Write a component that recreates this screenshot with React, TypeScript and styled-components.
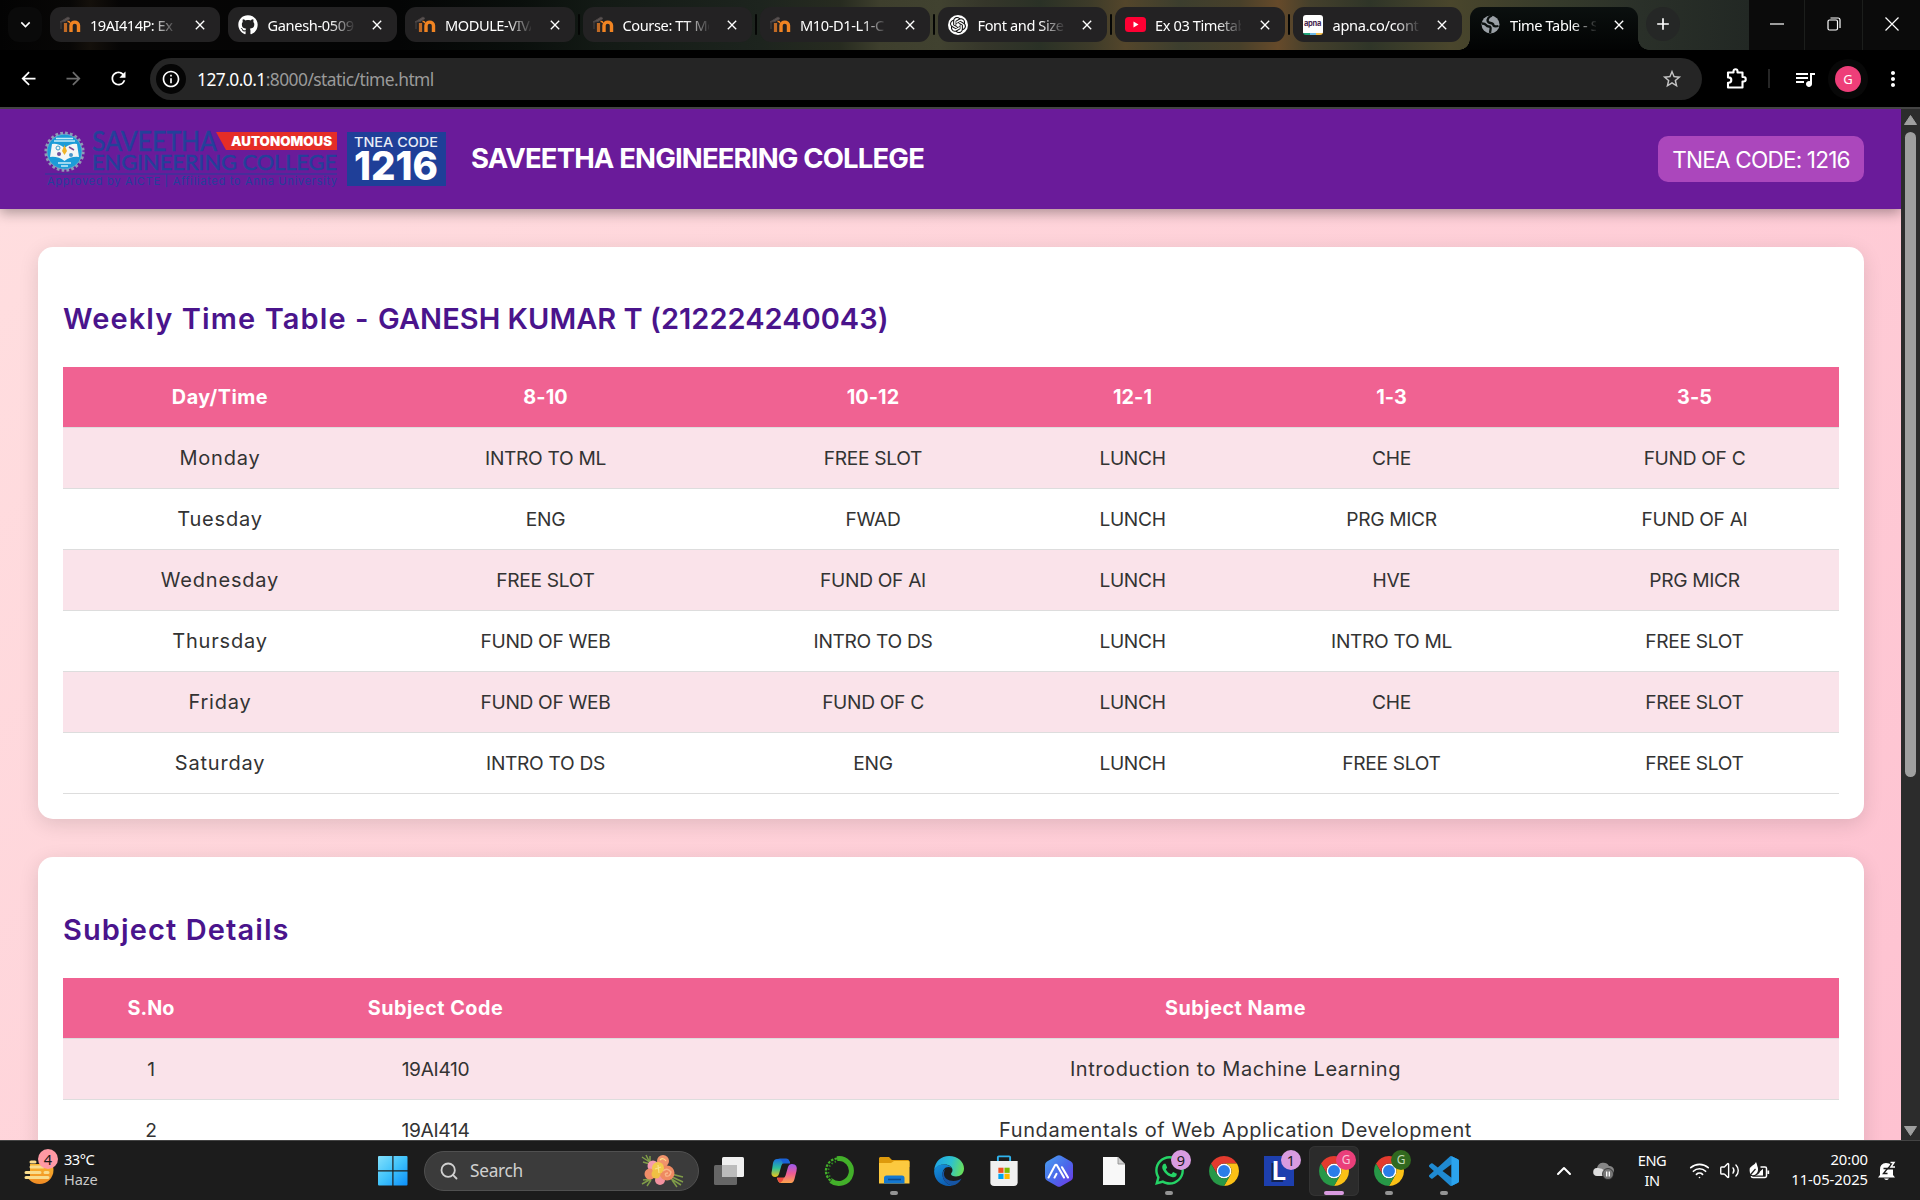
import React from "react";
import styled, { createGlobalStyle } from "styled-components";
import { FaGithub, FaWhatsapp } from "react-icons/fa6";
import { SiOpenai } from "react-icons/si";
import {
  MdArrowBack, MdArrowForward, MdRefresh, MdStarBorder, MdQueueMusic,
  MdMoreVert, MdAdd, MdClose, MdInfoOutline, MdKeyboardArrowDown,
} from "react-icons/md";
import { Wifi, Volume2, ChevronUp, Search } from "lucide-react";

const Global = createGlobalStyle`
  *{box-sizing:border-box}
  body{margin:0;background:#000;overflow:hidden}
`;
const UI = `"Noto Sans","Open Sans",sans-serif`;
const PAGE = `Inter,"Open Sans",sans-serif`;

const Screen = styled.div`
  width:1920px;height:1200px;display:flex;flex-direction:column;overflow:hidden;
  font-family:${UI};color:#fff;background:#000;
`;

/* ---------- browser chrome ---------- */
const TabStrip = styled.div`
  height:50px;flex:none;display:flex;align-items:flex-start;padding:7px 0 0 8px;
  background:linear-gradient(90deg,#030303 0,#080706 70px,#14100b 90px,#060505 120px,#040505 400px,#0a0f0c 520px,#131a15 600px,#1d241e 760px,#272b20 840px,#3e3f2d 880px,#414230 940px,#35362a 985px,#2a3126 1040px,#3d3b29 1090px,#54462b 1125px,#3c3e2e 1180px,#48402a 1240px,#664a2a 1278px,#45402c 1310px,#2f3528 1370px,#4a462c 1450px,#353a2b 1560px,#2a3029 1640px,#222824 1749px);
`;
const TabSearch = styled.div`
  width:34px;height:35px;border-radius:11px;background:#0a0a0a;margin-right:8px;
  display:grid;place-items:center;font-size:19px;
`;
const TabBox = styled.div<{ $active?: boolean }>`
  width:${p => (p.$active ? 168 : 169.5)}px;height:${p => (p.$active ? 43 : 35)}px;margin-right:8px;flex:none;
  padding:${p => (p.$active ? "0 11px 8px 10px" : "0 12px 0 10px")};
  border-radius:${p => (p.$active ? "11px 11px 0 0" : "11px")};
  background:${p => (p.$active ? "linear-gradient(#0b100f,#020303)" : "#232223")};
  display:flex;align-items:center;position:relative;
  &::before,&::after{content:"";display:${p => (p.$active ? "block" : "none")};position:absolute;bottom:0;width:11px;height:11px}
  &::before{left:-11px;background:radial-gradient(circle at 0 0,transparent 10.5px,#020303 11px)}
  &::after{right:-11px;background:radial-gradient(circle at 100% 0,transparent 10.5px,#020303 11px)}
`;
const TabLine = styled.i`
  position:absolute;left:-5px;top:7px;width:2px;height:21px;background:#050605;border-radius:1px;
`;
const Fav = styled.span`width:20px;height:22px;flex:none;display:grid;place-items:center;font-size:20px`;
const TabName = styled.span<{ $ls?: number }>`
  width:86px;margin-left:10px;font-size:14.6px;letter-spacing:${p => p.$ls ?? -0.4}px;line-height:22px;white-space:nowrap;overflow:hidden;
  -webkit-mask-image:linear-gradient(90deg,#000 62px,transparent 88px);
  mask-image:linear-gradient(90deg,#000 62px,transparent 88px);
`;
const TabClose = styled.span`margin-left:auto;display:grid;place-items:center;font-size:16px;stroke:#fff;stroke-width:.8px`;
const NewTab = styled.div`width:34px;height:34px;border-radius:50%;background:#252726;display:grid;place-items:center;font-size:20px`;
const WinButtons = styled.div`margin:-7px 0 0 auto;width:171px;height:50px;display:grid;grid-template-columns:56px 58px 57px;background:#0b0b0b`;
const WinButton = styled.div`display:grid;place-items:center;border-right:1px solid #1c1e1c;padding-bottom:2px;&:last-child{border:0}`;

const Toolbar = styled.div`
  height:57px;flex:none;display:flex;align-items:center;background:#000;padding-left:16px;
`;
const Nav = styled.span<{ $dim?: boolean; $mr: number }>`
  width:24px;height:24px;flex:none;display:grid;place-items:center;font-size:21px;margin-right:${p => p.$mr}px;color:${p => (p.$dim ? "#6d6d6d" : "#fff")};
`;
const Omnibox = styled.div`
  width:1552px;flex:none;height:42px;border-radius:21px;background:#252525;display:flex;align-items:center;padding:0 19px 0 6px;
`;
const Info = styled.span`width:30px;height:30px;border-radius:50%;background:#050505;display:grid;place-items:center;font-size:20px`;
const Url = styled.span`margin-left:11px;font-size:17.4px;letter-spacing:-.55px;color:#9a9a9a;flex:1;b{font-weight:400;color:#fff}`;
const Right = styled.div`display:flex;align-items:center;flex:none;padding-left:23px;svg{flex:none}`;
const Bar = styled.i`width:2px;height:19px;background:#262626;margin:0 23px 0 20px`;
const Avatar = styled.span`width:26px;height:26px;border-radius:50%;background:#ee3e79;box-shadow:0 0 0 7px #080808;display:grid;place-items:center;font-size:13px;margin:0 20px 0 18px`;
const Edge = styled.div`height:2px;flex:none;background:#444`;

/* ---------- web page ---------- */
const Viewport = styled.div`height:1031px;flex:none;display:flex;overflow:hidden`;
const Page = styled.div`
  width:1901px;height:1031px;overflow:hidden;font-family:${PAGE};
  background:linear-gradient(135deg,#ffdfe0,#fec2d1);
`;
const Header = styled.header`
  height:100px;background:#6a1b9a;box-shadow:0 4px 12px rgba(0,0,0,.32);
  display:flex;align-items:center;padding:0 37px 0 44px;
`;
const College = styled.h1`margin:0 auto 2px 24px;font-size:27.5px;font-weight:650;letter-spacing:-.85px;line-height:40px;white-space:nowrap`;
const Code = styled.span`
  width:206px;height:46px;border-radius:10px;background:#ab47bc;display:grid;place-items:center;
  font-size:22.6px;letter-spacing:-.82px;white-space:nowrap;
`;
const Main = styled.main`padding:38px 37px 0 38px;display:flex;flex-direction:column;gap:38px`;
const Card = styled.section`
  background:#fff;border-radius:15px;padding:25px;box-shadow:0 5px 20px rgba(0,0,0,.12);
`;
const Title = styled.h2<{ $mt: number }>`
  margin:${p => p.$mt}px 0 24px;height:46px;line-height:44px;font-size:29px;font-weight:600;color:#4a148c;letter-spacing:.03px;white-space:nowrap;
`;
const Words = styled.span`letter-spacing:1.1px`;
const Table = styled.table`width:1776px;table-layout:fixed;border-collapse:separate;border-spacing:0;font-size:19.2px;color:#333`;
const Col = styled.col<{ $w: number }>`width:${p => p.$w}px`;
const Row = styled.tr`&:nth-child(odd){background:#fae3ea}`;
const Th = styled.th<{ $ls: number }>`height:61px;padding:0;background:#f06292;border-bottom:1px solid #ddd;color:#fff;font-weight:650;font-size:19.8px;letter-spacing:${p => p.$ls}px`;
const Td = styled.td<{ $kind: "caps" | "words" | "day" }>`
  height:61px;padding:0;text-align:center;border-bottom:1px solid #ddd;
  font-size:${p => (p.$kind === "caps" ? 19.2 : 20)}px;
  letter-spacing:${p => ({ caps: -0.33, words: 0.58, day: 0.8 })[p.$kind]}px;
`;

const Scroll = styled.div`width:19px;background:#2c2c2c;display:flex;flex-direction:column;align-items:center;padding:6px 0 4px`;
const Thumb = styled.div`width:11px;height:645px;border-radius:6px;background:#9f9f9f;margin:7px 0 auto`;

/* ---------- taskbar ---------- */
const Taskbar = styled.footer`
  height:60px;flex:none;background:#1c1c1c;border-top:1px solid #444;display:flex;align-items:center;
`;
const Weather = styled.div`width:354px;padding-left:24px;display:flex;align-items:center;height:59px`;
const WeatherIcon = styled.div`position:relative;width:32px;height:40px;margin:0 8px 2px 0`;
const WeatherText = styled.div`font-size:14.6px;line-height:20px;letter-spacing:-.5px;padding-bottom:3px;span{display:block;color:#c9c9c9;letter-spacing:-.1px}`;
const Cell = styled.div<{ $on?: boolean }>`
  width:50px;height:50px;margin-right:5px;flex:none;display:grid;place-items:center;position:relative;border-radius:6px;
  background:${p => (p.$on ? "#2b2b2b" : "transparent")};box-shadow:${p => (p.$on ? "inset 0 0 0 1px #333" : "none")};
`;
const StartCell = styled(Cell)`width:77px;margin:0`;
const SearchBox = styled.div`
  width:275px;height:40px;border-radius:20px;background:#3b3b3b;border:1px solid #505050;display:flex;align-items:center;
  padding:0 12px 0 14px;font-size:17.3px;letter-spacing:-.3px;color:#d0d0d0;margin:0 5px 0 -7px;
  span{margin:0 auto 0 11px}
`;
const Dot = styled.i<{ $on?: boolean }>`
  position:absolute;bottom:1px;left:50%;transform:translateX(-50%);width:${p => (p.$on ? 20 : 8)}px;height:4px;border-radius:2px;
  background:${p => (p.$on ? "#d99be0" : "#949494")};
`;
const Badge = styled.b<{ $c: string; $t?: string }>`
  position:absolute;left:27px;top:4px;width:20px;height:20px;border-radius:50%;background:${p => p.$c};color:${p => p.$t ?? "#1a1a1a"};
  display:grid;place-items:center;font-weight:400;font-size:${p => (p.$t ? 12 : 14.5)}px;line-height:20px;
`;
const WBadge = styled(Badge)`left:14px;top:-1px`;
const Tray = styled.div`margin-left:auto;display:flex;align-items:center;height:59px;padding-right:24px;font-size:15px;line-height:20px`;
const Lang = styled.div`width:30px;margin:0 22px 2px 22px;text-align:center;letter-spacing:-.45px;font-size:14.6px`;
const Icons = styled.div`display:flex;gap:9px;align-items:center`;
const Clock = styled.div`width:80px;margin:0 10px 4px 18px;text-align:right;font-size:14.8px;letter-spacing:-.05px;white-space:nowrap`;

/* ---------- drawings ---------- */
const Moodle = () => (
  <svg width="21" height="18" viewBox="0 0 21 18">
    <path d="M0 6l8-5 2 1.500-5 3zM1 6v7" fill="#5a5352" stroke="#4b4545" strokeWidth="1" />
    <path d="M5.500 16V7" stroke="#c06a25" strokeWidth="3.200" />
    <path d="M11 16V9.500c0-4.500 7.500-4.500 7.500 0V16" fill="none" stroke="#f18422" strokeWidth="3.400" />
    <path d="M7.500 5.500q2-.5 2.500 1.500" fill="none" stroke="#f18422" strokeWidth="1.500" />
  </svg>
);
const Globe = () => (
  <svg width="19" height="19" viewBox="0 0 19 19">
    <circle cx="9.500" cy="9.500" r="9" fill="#9aa0a6" />
    <path d="M11 .5Q7 2 6.500 5q0 2.500 3 3t3 2.500q1 1.500 5 .5M1 8.500q3 0 4 1.500t3 1.500 1.500 3L9 18" fill="none" stroke="#0b100f" strokeWidth="2.300" />
  </svg>
);
const Gpt = styled.span`width:20px;height:20px;border-radius:50%;background:#fff;color:#111;display:grid;place-items:center;font-size:16px`;
const Apna = styled.span`
  width:20px;height:20px;border-radius:3px;background:linear-gradient(90deg,#1fa67a 33%,#6db9e8 33% 66%,#f3bd4d 66%) bottom/100% 2px no-repeat #fff;
  color:#46264f;font:700 7.6px/18px ${PAGE};text-align:center;letter-spacing:-.3px;
`;
const YouTube = () => (
  <svg width="21" height="15" viewBox="0 0 21 15"><rect width="21" height="15" rx="3.500" fill="#ff0033" /><path d="M8.500 4.500l5 3-5 3z" fill="#fff" /></svg>
);
const Puzzle = () => (
  <svg width="23" height="23" viewBox="0 0 23 23">
    <path d="M3 5.500H8.500V4.200a2 2 0 0 1 4 0V5.500H17.500V10h1a2 2 0 0 1 0 4.500h-1V20.500H3V15.800h.6a2.600 2.600 0 0 0 0-5.400H3z" fill="none" stroke="#fff" strokeWidth="2.100" strokeLinejoin="round" />
  </svg>
);

const Logo = () => (
  <svg width="403" height="58" viewBox="44 130 403 58">
    <circle cx="64.500" cy="151.700" r="18.600" fill="none" stroke="#8f9bb5" strokeWidth="3" strokeDasharray="2.700 2.172" />
    <circle cx="64.500" cy="151.700" r="17.500" fill="#1c9cd8" stroke="#7fb0c8" strokeWidth=".8" />
    <path d="M52 144q6-1 12.500 4 6.500-5 12.500-4l2 13q-8-1-14.500 4-6.500-5-14.500-4z" fill="#f4f6f5" />
    <circle cx="58" cy="148" r="2" fill="none" stroke="#3e9dc9" /><circle cx="59" cy="154" r="2" fill="#72509a" />
    <circle cx="71" cy="155" r="2" fill="#4a96c9" /><path d="M69 147l5 3" stroke="#7b4a96" strokeWidth="1.500" />
    <path d="M64.500 145l2.500 6-2.500 4-2.500-4z" fill="#f0b429" />
    <path d="M54 141h21M56 138.500h17M58 163h13M61 166h7" stroke="#c7ecf8" strokeWidth="1.300" />
    <g fill="#24409a" stroke="#24409a" fontFamily="Lato,sans-serif">
      <text x="92" y="151" fontSize="26" strokeWidth=".5" textLength="125" lengthAdjust="spacingAndGlyphs">SAVEETHA</text>
      <text x="92" y="169.500" fontSize="20.500" strokeWidth=".5" textLength="245" lengthAdjust="spacingAndGlyphs">ENGINEERING COLLEGE</text>
      <text x="47" y="184.500" fontSize="11" strokeWidth="0" textLength="290" lengthAdjust="spacing" fontFamily="Inter,sans-serif">Approved by AICTE | Affiliated to Anna University</text>
    </g>
    <path d="M45 174H337" stroke="#24409a" />
    <path d="M216 132H337V150H226z" fill="#e52d27" />
    <text x="231" y="146" fontSize="13" fontWeight="900" fill="#fff" fontFamily="Inter,sans-serif" textLength="101" lengthAdjust="spacingAndGlyphs">AUTONOMOUS</text>
    <rect x="347" y="132" width="99" height="54" fill="#1f3f98" />
    <text x="354" y="146.800" fontSize="13.500" fill="#e8ecf6" fontWeight="500" fontFamily="Inter,sans-serif" textLength="84" lengthAdjust="spacingAndGlyphs">TNEA CODE</text>
    <text x="354" y="180" fontSize="39" fill="#fff" fontWeight="800" fontFamily="Inter,sans-serif" textLength="84" lengthAdjust="spacingAndGlyphs">1216</text>
  </svg>
);

const Chrome = () => (
  <svg width="30" height="30" viewBox="0 0 48 48">
    <circle cx="24" cy="24" r="12" fill="#fff" />
    <path d="M24 12H44.780A24 24 0 0 0 3.217 12.003L13.608 30A12 12 0 0 1 24 12z" fill="#e33b2e" />
    <path d="M34.391 30.003L24 48A24 24 0 0 0 44.780 12.003H24A12 12 0 0 1 34.391 30.003z" fill="#fbc116" />
    <path d="M13.609 30.003L3.218 12.006A24 24 0 0 0 24.002 48L34.393 30.003A12 12 0 0 1 13.609 30.003z" fill="#279847" />
    <circle cx="24" cy="24" r="9.500" fill="#2a7de8" />
  </svg>
);
const Start = () => (
  <svg width="30" height="30" viewBox="0 0 30 30">
    <defs><linearGradient id="win" x1="0" y1="0" x2="1" y2="1"><stop stopColor="#83e0fb" /><stop offset=".5" stopColor="#3fc2fb" /><stop offset="1" stopColor="#0c8ffb" /></linearGradient></defs>
    <path fill="url(#win)" d="M1 0H14.300V14.300H0V1a1 1 0 0 1 1-1zM15.500 0H28.500a1 1 0 0 1 1 1V14.300H15.500zM0 15.500H14.300V29.500H1a1 1 0 0 1-1-1zM15.500 15.500H29.500V28.500a1 1 0 0 1-1 1H15.500z" />
  </svg>
);
const Flowers = () => (
  <svg width="46" height="34" viewBox="0 0 46 34">
    <g fill="none" stroke="#7f9c48" strokeWidth="1.500"><path d="M2 3l9 6M3 8l7 2M6 1l3 6M10 2v6M2 30l9-5M3 26l8-1M7 32l4-6M30 22l13 6M30 24l11 7M31 20l12 3M32 26l5 7" /></g>
    <circle cx="13" cy="12" r="5.500" fill="#f49bb0" /><circle cx="20" cy="26" r="5" fill="#f3929f" />
    <circle cx="23" cy="7" r="6" fill="#f0936b" /><circle cx="10" cy="20" r="5.500" fill="#f08d68" />
    <circle cx="27" cy="19" r="7.500" fill="#ee8a62" /><path d="M23 17q4-4 8 1-1 5-5 4-2-3 2-3" fill="none" stroke="#f9b58a" strokeWidth="1.400" />
    <circle cx="18" cy="14" r="6" fill="#f2c94b" /><circle cx="16" cy="20" r="4.500" fill="#f0c044" /><path d="M15 15l6-2M18 11l1 8M20 6q3-3 6 1" stroke="#fbe08a" strokeWidth="1.200" fill="none" />
  </svg>
);
const TaskView = () => (
  <svg width="32" height="30" viewBox="0 0 32 30"><rect x="1" y="9" width="23" height="20" rx="1.500" fill="#666" /><rect x="9" y="1" width="22" height="20" rx="1.500" fill="#f0f0f0" /><path d="M9 9H24V21H9z" fill="#bcbcbc" /></svg>
);
const Copilot = () => (
  <svg width="30" height="28" viewBox="0 0 30 28">
    <defs>
      <linearGradient id="ca" x1="0" y1="0" x2="0" y2="1"><stop stopColor="#1b6fe0" /><stop offset=".5" stopColor="#2cbf9b" /><stop offset="1" stopColor="#f2c718" /></linearGradient>
      <linearGradient id="cb" x1="0" y1="0" x2="0" y2="1"><stop stopColor="#9b5af0" /><stop offset=".5" stopColor="#ee5b94" /><stop offset="1" stopColor="#fca34b" /></linearGradient>
    </defs>
    <path d="M8 2h10q2 0 3 4l-6 0q-2 0-3 4l-2 7q-1 3-4 3-5 0-3-7l1-7q1-4 4-4z" fill="url(#ca)" />
    <path d="M8 1.500h9q3 0 4 5h-7q-1.500-5-6-5z" fill="#1a62d8" />
    <path d="M22 26H12q-3 0-4-5h6q2 0 3-4l2-7q1-3 4-3 6 0 4.500 7l-2 8q-1 4-3.500 4z" fill="url(#cb)" />
    <path d="M8 20.500h7q-1 4-4 5.500-2-2-3-5.500z" fill="#ee4a3c" />
  </svg>
);
const Anaconda = () => (
  <svg width="32" height="32" viewBox="0 0 32 32">
    <path d="M14 3.600A12.500 12.500 0 1 1 8 25.700" fill="none" stroke="#43b02a" strokeWidth="5" />
    <path d="M14 3.500A12.500 12.500 0 0 0 8 26" fill="none" stroke="#43b02a" strokeWidth="2.200" strokeDasharray="2.500 1.300" />
    <path d="M13 6.500A10 10 0 0 0 9 24" fill="none" stroke="#2f8a20" strokeWidth="1.800" strokeDasharray="1.500 2" />
  </svg>
);
const Explorer = () => (
  <svg width="31" height="27" viewBox="0 0 31 27"><path d="M1 0H10l3 3H29a1.500 1.500 0 0 1 1.500 1.500V10H0V1z" fill="#dd9a0c" /><path d="M0 6H12l3-2H29.500a1 1 0 0 1 1 1V26.500H0z" fill="#fcc93f" /><path d="M5 26.500V21a2.500 2.500 0 0 1 2.500-2.500H23A2.500 2.500 0 0 1 25.500 21v5.500z" fill="#1478d0" /><path d="M9 22.500H22" stroke="#0a4a8c" strokeWidth="1.600" /></svg>
);
const EdgeIcon = () => (
  <svg width="30" height="30" viewBox="0 0 30 30">
    <defs>
      <linearGradient id="ea" x1="0" y1=".3" x2="1" y2=".5"><stop stopColor="#1fa5e6" /><stop offset=".55" stopColor="#2dc1cf" /><stop offset="1" stopColor="#68df5c" /></linearGradient>
      <linearGradient id="eb" x1="0" y1="0" x2=".4" y2="1"><stop stopColor="#1592dc" /><stop offset="1" stopColor="#0d5fb4" /></linearGradient>
    </defs>
    <path d="M.2 14C1 5.500 7 0 15 0c9 0 15 6 15 12.500 0 5-3.500 8-8 8-3 0-5-1-5-2.500 0-1 1.500-1.800 1.500-4 0-3-3-5.500-8-5.500C5.500 8.500 2 10.500.2 14z" fill="url(#ea)" />
    <path d="M.1 15C1 10.500 5 8.500 10 8.500c4.500 0 8.500 2.500 8.500 5.500 0-1.800-2-3-4-3-4 0-6 3.500-6 7 0 6 4 10.500 10 11.500-1 .4-2.500.5-3.500.5C6.500 30 0 23.500.1 15z" fill="url(#eb)" />
    <path d="M11.500 13c-1 1-1.500 3-1.500 5 0 4 4 7 9.500 7 3.500 0 6-1.200 8-2.500-2 4-5 6.300-9 7-6-1-10-5.500-10-11.500 0-2 1.500-4 3-5z" fill="#1655a4" />
  </svg>
);
const Store = () => (
  <svg width="30" height="32" viewBox="0 0 30 34"><path d="M8.500 8V2.500a1 1 0 0 1 1-1h11a1 1 0 0 1 1 1V8" fill="none" stroke="#2fb4ee" strokeWidth="2" /><path d="M.5 6.500H29.500V29a4 4 0 0 1-4 4h-21a4 4 0 0 1-4-4z" fill="#f0f0f0" /><path d="M9 13.500h5.500V19H9z" fill="#f25022" /><path d="M15.500 13.500H21V19h-5.500z" fill="#7fba00" /><path d="M9 20h5.500v5.500H9z" fill="#00a4ef" /><path d="M15.500 20H21v5.500h-5.500z" fill="#ffb900" /></svg>
);
const Hex = () => (
  <svg width="28" height="32" viewBox="0 0 28 34" preserveAspectRatio="none"><defs><linearGradient id="hx" x1="0" y1="0" x2="1" y2="1"><stop stopColor="#4aa3f0" /><stop offset=".55" stopColor="#4b66ea" /><stop offset="1" stopColor="#7334e6" /></linearGradient></defs><path d="M12 .8q2-1.200 4 0L26 7q2 1.200 2 3.500v13q0 2.300-2 3.500L16 33.200q-2 1.200-4 0L2 27q-2-1.200-2-3.500v-13Q0 8.200 2 7z" fill="url(#hx)" /><path d="M3.500 24L10 11q1-1.500 2 0l7 13M17 13l6 11M9.500 24l2-4" fill="none" stroke="#fff" strokeWidth="2.100" strokeLinejoin="round" strokeLinecap="round" /></svg>
);
const FileIcon = () => (
  <svg width="22" height="28" viewBox="0 0 22 28"><path d="M0 0H15l7 7V28H0z" fill="#f8f8f8" /><path d="M15 0v7h7z" fill="#d0d0d0" stroke="#888" strokeWidth=".8" /></svg>
);
const Letter = styled.span`width:30px;height:30px;background:#1d3fae;display:grid;place-items:center;font:700 25px/30px ${PAGE};color:#fff;text-shadow:-2px 2px 0 #13224f`;
const VsCode = () => (
  <svg width="30" height="30" viewBox="0 0 24 24"><path fill="#1f8ad2" d="M23.150 2.587L18.210.21a1.494 1.494 0 0 0-1.705.29l-9.460 8.630-4.120-3.128a.999.999 0 0 0-1.276.057L.327 7.261A1 1 0 0 0 .326 8.740L3.899 12 .326 15.260a1 1 0 0 0 .001 1.479L1.650 17.940a.999.999 0 0 0 1.276.057l4.120-3.128 9.460 8.630a1.492 1.492 0 0 0 1.704.29l4.942-2.377A1.500 1.500 0 0 0 24 20.060V3.939a1.500 1.500 0 0 0-.85-1.352zm-5.146 14.861L10.826 12l7.178-5.448v10.896z" /><path d="M18 .1l5.150 2.487A1.500 1.500 0 0 1 24 3.940V20.060a1.500 1.500 0 0 1-.85 1.352L18 23.900z" fill="#2ba3ee" /></svg>
);
const Haze = () => (
  <svg width="32" height="40" viewBox="0 0 32 40"><defs><linearGradient id="hz" x1="0" y1="0" x2="0" y2="1"><stop stopColor="#fbc531" /><stop offset="1" stopColor="#f08a24" /></linearGradient></defs><circle cx="15.500" cy="20" r="14" fill="url(#hz)" /><path d="M0 0H32V14H0zM0 14H6v14H0z" fill="#1c1c1c" /><g stroke="#f9dc8c" strokeWidth="3" strokeLinecap="round"><path d="M7 12h4M7 17h12M2 22.500h14M21 22.500h3M2 27.500h22" /></g></svg>
);
const Cloud = () => (
  <svg width="22" height="18" viewBox="0 0 22 18"><path d="M4 14a4 4 0 0 1 0-8 6.500 6.500 0 0 1 12-2 4 4 0 0 1 1 9z" fill="#858585" /><path d="M4 14a4 4 0 0 1 1-8q4 0 7 3v5z" fill="#ddd" /><circle cx="15" cy="12" r="5.500" fill="#777" stroke="#1c1c1c" strokeWidth=".7" /><path d="M13.700 9.500v5M16.300 9.500v5" stroke="#fff" strokeWidth="1.300" /></svg>
);
const Battery = () => (
  <svg width="21" height="18" viewBox="0 0 21 18"><path d="M11.500 5H16a1.500 1.500 0 0 1 1.500 1.500v7.500a1.500 1.500 0 0 1-1.500 1.500H4q-1.500 0-1.800-1.300" fill="none" stroke="#fff" strokeWidth="1.500" /><path d="M19.300 8.500v3.500" stroke="#fff" strokeWidth="1.800" /><path d="M7 0q1 2 1.300 4 1.700 4-.3 7-3 3.500-6.500 1.500Q-1 6 3.500 3.500 6 2.500 7 0z" fill="#fff" /><path d="M14 6.800V13.500H6q4-1 5-4z" fill="#fff" /><path d="M0 14.500l6.500-7.500" stroke="#1c1c1c" strokeWidth="1.200" /></svg>
);
const Bell = () => (
  <svg width="18" height="20" viewBox="0 0 18 20"><path d="M2 14V9a6 6 0 0 1 6-7q7 0 7 7v5l2 2.500H0z" fill="#fff" /><path d="M6 17.500h5q-2.500 3-5 0z" fill="#fff" /><path d="M5.500 7.500h4l-4 5h4" fill="none" stroke="#1c1c1c" strokeWidth="1.400" /><path d="M12 1.500h4.500l-4 5H17" fill="none" stroke="#1c1c1c" strokeWidth="4" /><path d="M12.500 1.500H16l-3 4.500h4" fill="none" stroke="#fff" strokeWidth="1.500" /></svg>
);

const tabs: { name: string; icon: React.ReactNode; active?: boolean; line?: boolean; ls?: number }[] = [
  { name: "19AI414P: Ex 0", icon: <Moodle />, ls: -0.5 },
  { name: "Ganesh-0509/", icon: <FaGithub />, ls: -0.35 },
  { name: "MODULE-VIVA", icon: <Moodle />, ls: -0.45 },
  { name: "Course: TT Mo", icon: <Moodle />, line: true },
  { name: "M10-D1-L1-C", icon: <Moodle />, line: true },
  { name: "Font and Size", icon: <Gpt><SiOpenai /></Gpt>, line: true },
  { name: "Ex 03 Timetab", icon: <YouTube />, line: true },
  { name: "apna.co/conte", icon: <Apna>apna</Apna>, line: true, ls: -0.3 },
  { name: "Time Table - S", icon: <Globe />, active: true },
];

const hours = ["Day/Time", "8-10", "10-12", "12-1", "1-3", "3-5"];
const week = [
  ["Monday", "INTRO TO ML", "FREE SLOT", "LUNCH", "CHE", "FUND OF C"],
  ["Tuesday", "ENG", "FWAD", "LUNCH", "PRG MICR", "FUND OF AI"],
  ["Wednesday", "FREE SLOT", "FUND OF AI", "LUNCH", "HVE", "PRG MICR"],
  ["Thursday", "FUND OF WEB", "INTRO TO DS", "LUNCH", "INTRO TO ML", "FREE SLOT"],
  ["Friday", "FUND OF WEB", "FUND OF C", "LUNCH", "CHE", "FREE SLOT"],
  ["Saturday", "INTRO TO DS", "ENG", "LUNCH", "FREE SLOT", "FREE SLOT"],
];
const subjects = [
  ["1", "19AI410", "Introduction to Machine Learning"],
  ["2", "19AI414", "Fundamentals of Web Application Development"],
];

const kindOf = (text: string) => (text.endsWith("day") ? "day" : /[a-z]/.test(text) ? "words" : "caps");

function Grid({ widths, head, rows }: { widths: number[]; head: string[]; rows: string[][] }) {
  return (
    <Table>
      <colgroup>{widths.map((w, i) => <Col key={i} $w={w} />)}</colgroup>
      <thead><tr>{head.map(h => <Th key={h} $ls={h.length > 5 ? 0.5 : 0.1}>{h}</Th>)}</tr></thead>
      <tbody>{rows.map(r => (
        <Row key={r[0]}>{r.map((c, i) => <Td key={i} $kind={kindOf(c)}>{c}</Td>)}</Row>
      ))}</tbody>
    </Table>
  );
}

export default function App() {
  return (
    <Screen>
      <Global />
      <TabStrip>
        <TabSearch><MdKeyboardArrowDown /></TabSearch>
        {tabs.map((t, i) => (
          <TabBox key={i} $active={t.active}>
            {t.line && <TabLine />}
            <Fav>{t.icon}</Fav>
            <TabName $ls={t.ls}>{t.name}</TabName>
            <TabClose><MdClose /></TabClose>
          </TabBox>
        ))}
        <NewTab><MdAdd /></NewTab>
        <WinButtons>
          <WinButton><svg width="14" height="14" viewBox="0 0 14 14"><path d="M0 7H14" stroke="#fff" strokeWidth="1.200" /></svg></WinButton>
          <WinButton><svg width="14" height="14" viewBox="0 0 14 14" fill="none" stroke="#fff" strokeWidth="1.200"><rect x="1" y="3" width="9.500" height="10" rx="1.500" /><path d="M3.500 1H11q2 0 2 2v8" /></svg></WinButton>
          <WinButton><svg width="14" height="14" viewBox="0 0 14 14"><path d="M.5.5l13 13M13.500.5l-13 13" stroke="#fff" strokeWidth="1.200" /></svg></WinButton>
        </WinButtons>
      </TabStrip>
      <Toolbar>
        <Nav $mr={21}><MdArrowBack /></Nav>
        <Nav $dim $mr={21}><MdArrowForward /></Nav>
        <Nav $mr={20}><MdRefresh /></Nav>
        <Omnibox>
          <Info><MdInfoOutline /></Info>
          <Url><b>127.0.0.1</b>:8000/static/time.html</Url>
          <MdStarBorder size={22} color="#c4c4c4" />
        </Omnibox>
        <Right>
          <Puzzle />
          <Bar />
          <MdQueueMusic size={24} />
          <Avatar>G</Avatar>
          <MdMoreVert size={24} />
        </Right>
      </Toolbar>
      <Edge />
      <Viewport>
        <Page>
          <Header>
            <Logo />
            <College>SAVEETHA ENGINEERING COLLEGE</College>
            <Code>TNEA CODE: 1216</Code>
          </Header>
          <Main>
            <Card>
              <Title $mt={25}><Words>Weekly Time Table - </Words>GANESH KUMAR T (212224240043)</Title>
              <Grid widths={[314, 337, 318, 201, 317, 289]} head={hours} rows={week} />
            </Card>
            <Card>
              <Title $mt={26}><Words>Subject Details</Words></Title>
              <Grid widths={[176, 393, 1207]} head={["S.No", "Subject Code", "Subject Name"]} rows={subjects} />
            </Card>
          </Main>
        </Page>
        <Scroll>
          <svg width="13" height="10" viewBox="0 0 13 10"><path d="M6.500.5L12.500 9.500H.5z" fill="#9f9f9f" stroke="#9f9f9f" strokeLinejoin="round" /></svg>
          <Thumb />
          <svg width="13" height="10" viewBox="0 0 13 10"><path d="M6.500 9.500L12.500.5H.5z" fill="#9f9f9f" stroke="#9f9f9f" strokeLinejoin="round" /></svg>
        </Scroll>
      </Viewport>
      <Taskbar>
        <Weather>
          <WeatherIcon><Haze /><WBadge $c="#ff99a4">4</WBadge></WeatherIcon>
          <WeatherText>33°C<span>Haze</span></WeatherText>
        </Weather>
        <StartCell><Start /></StartCell>
        <SearchBox><Search size={20} strokeWidth={2.200} /><span>Search</span><Flowers /></SearchBox>
        <Cell><TaskView /></Cell>
        <Cell><Copilot /></Cell>
        <Cell><Anaconda /></Cell>
        <Cell><Explorer /><Dot /></Cell>
        <Cell><EdgeIcon /></Cell>
        <Cell><Store /></Cell>
        <Cell><Hex /></Cell>
        <Cell><FileIcon /></Cell>
        <Cell><FaWhatsapp size={33} color="#25d366" /><Badge $c="#d99be0">9</Badge><Dot /></Cell>
        <Cell><Chrome /></Cell>
        <Cell><Letter>L</Letter><Badge $c="#d99be0">1</Badge></Cell>
        <Cell $on><Chrome /><Badge $c="#ea3f7a" $t="#f7c6d8">G</Badge><Dot $on /></Cell>
        <Cell><Chrome /><Badge $c="#31691f" $t="#c3dcba">G</Badge><Dot /></Cell>
        <Cell><VsCode /><Dot /></Cell>
        <Tray>
          <ChevronUp size={24} />
          <svg width="17" height="1" />
          <Cloud />
          <Lang>ENG<br />IN</Lang>
          <Icons><Wifi size={21} strokeWidth={1.900} /><Volume2 size={21} strokeWidth={1.600} /><Battery /></Icons>
          <Clock>20:00<br />11-05-2025</Clock>
          <Bell />
        </Tray>
      </Taskbar>
    </Screen>
  );
}
